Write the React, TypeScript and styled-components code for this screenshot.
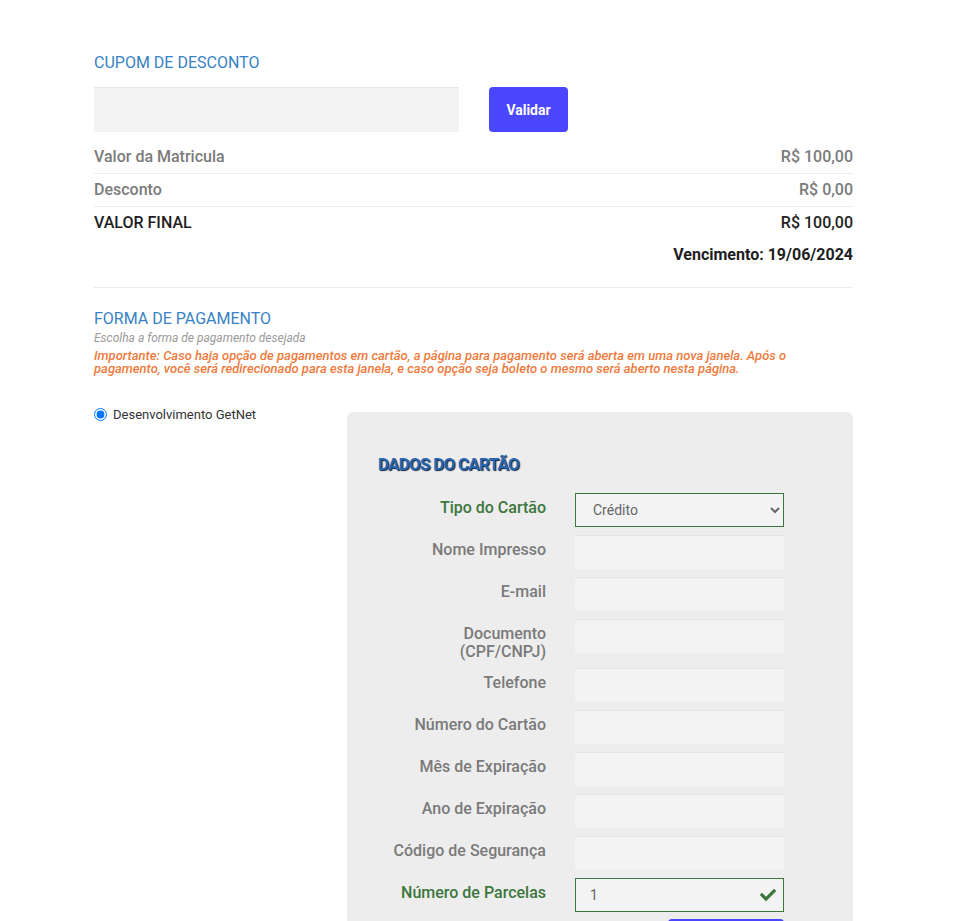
import React from "react";
import styled, { createGlobalStyle } from "styled-components";
import { FaCheck } from "react-icons/fa";

const GlobalStyle = createGlobalStyle`
  html, body { margin: 0; padding: 0; background: #fff; }
  body { font-family: Roboto, "Liberation Sans", Arial, sans-serif; }
  * { box-sizing: border-box; }
`;

const Page = styled.div`
  width: 759px;
  margin-left: 94px;
  padding-top: 54px;
  padding-bottom: 60px;
`;

const SectionTitle = styled.h2<{ $top?: number }>`
  margin: ${(p) => p.$top ?? 0}px 0 0;
  font-size: 16px;
  line-height: 18px;
  font-weight: 400;
  color: #3782c4;
`;

const CouponRow = styled.div`
  display: flex;
  gap: 30px;
  margin-top: 15px;
`;

const CouponInput = styled.input`
  width: 365px;
  height: 45px;
  background: #f3f3f3;
  border: none;
  border-top: 1px solid #e6e6e6;
  outline: none;
  padding: 0 12px;
  font: inherit;
`;

const BlueButton = styled.button<{ $w: number; $h: number }>`
  width: ${(p) => p.$w}px;
  height: ${(p) => p.$h}px;
  background: #4b47fd;
  color: #fff;
  border: none;
  border-radius: 4px;
  font-family: Roboto, "Liberation Sans", Arial, sans-serif;
  font-size: 14px;
  font-weight: 700;
  cursor: pointer;
`;

const SummaryList = styled.div`
  margin-top: 9px;
`;

const SummaryRow = styled.div<{ $strong?: boolean; $line?: boolean }>`
  display: flex;
  justify-content: space-between;
  align-items: center;
  height: 33px;
  padding-bottom: 2px;
  border-bottom: ${(p) => (p.$line ? "1px solid #ececec" : "none")};
  font-size: 16px;
  font-weight: 500;
  color: ${(p) => (p.$strong ? "#1e1e1e" : "#7b7b7b")};
`;

const DueRow = styled.div`
  height: 28px;
  display: flex;
  align-items: center;
  justify-content: flex-end;
  font-size: 16px;
  font-weight: 700;
  color: #1e1e1e;
`;

const Divider = styled.hr`
  margin: 19px 0 0;
  border: none;
  border-top: 1px solid #ececec;
`;

const Hint = styled.p`
  margin: 3px 0 0;
  font-size: 12px;
  line-height: 14px;
  font-style: italic;
  color: #9a9a9a;
`;

const Warning = styled.p`
  margin: 4px 0 0;
  font-size: 13px;
  line-height: 13px;
  font-style: italic;
  font-weight: 500;
  color: #f07a3c;
`;

const PaymentGrid = styled.div`
  display: grid;
  grid-template-columns: 253px 506px;
  margin-top: 33px;
  align-items: start;
`;

const RadioLabel = styled.label`
  display: flex;
  align-items: center;
  gap: 6px;
  font-size: 13px;
  line-height: 13px;
  color: #333;
  input {
    margin: 0;
    width: 13px;
    height: 13px;
  }
`;

const Panel = styled.div`
  margin-top: 4px;
  background: #ededed;
  border-radius: 6px;
  padding: 42px 69px 40px 31px;
`;

const PanelTitle = styled.h3`
  margin: 0 0 19px;
  font-size: 17px;
  line-height: 20px;
  font-weight: 700;
  letter-spacing: -0.75px;
  color: #2766b3;
  text-shadow: 1px 1px 1px #0d2440;
`;

const FormGrid = styled.div`
  display: grid;
  grid-template-columns: 168px 209px;
  column-gap: 29px;
  row-gap: 8px;
`;

const FieldLabel = styled.label<{ $ok?: boolean }>`
  text-align: right;
  font-size: 16px;
  font-weight: 500;
  line-height: 17.5px;
  padding-top: 6px;
  color: ${(p) => (p.$ok ? "#3c763d" : "#7a7a7a")};
`;

const FieldWrap = styled.div`
  position: relative;
  height: 34px;
`;

const TextInput = styled.input<{ $ok?: boolean }>`
  width: 100%;
  height: 34px;
  background: #f3f3f3;
  border: ${(p) => (p.$ok ? "1px solid #3c763d" : "none")};
  border-top: 1px solid ${(p) => (p.$ok ? "#3c763d" : "#e4e4e4")};
  padding: 0 14px;
  outline: none;
  font-family: Roboto, "Liberation Sans", Arial, sans-serif;
  font-size: 14px;
  color: #666;
`;

const Select = styled.select`
  width: 100%;
  height: 34px;
  background: #f3f3f3;
  border: 1px solid #3c763d;
  border-radius: 0;
  padding: 0 10px 0 13px;
  outline: none;
  font-family: Roboto, "Liberation Sans", Arial, sans-serif;
  font-size: 14px;
  color: #666;
`;

const CheckMark = styled.span`
  position: absolute;
  right: 8px;
  top: 9px;
  color: #3c763d;
  display: flex;
`;

const SubmitRow = styled.div`
  display: flex;
  margin-top: 7px;
  padding-left: 290px;
`;

const fields = [
  "Nome Impresso",
  "E-mail",
  "Documento (CPF/CNPJ)",
  "Telefone",
  "Número do Cartão",
  "Mês de Expiração",
  "Ano de Expiração",
  "Código de Segurança",
];

export default function App() {
  return (
    <>
      <GlobalStyle />
      <Page>
        <SectionTitle>CUPOM DE DESCONTO</SectionTitle>
        <CouponRow>
          <CouponInput />
          <BlueButton $w={79} $h={45}>Validar</BlueButton>
        </CouponRow>
        <SummaryList>
          <SummaryRow $line>
            <span>Valor da Matricula</span>
            <span>R$ 100,00</span>
          </SummaryRow>
          <SummaryRow $line>
            <span>Desconto</span>
            <span>R$ 0,00</span>
          </SummaryRow>
          <SummaryRow $strong>
            <span>VALOR FINAL</span>
            <span>R$ 100,00</span>
          </SummaryRow>
          <DueRow>Vencimento: 19/06/2024</DueRow>
        </SummaryList>
        <Divider />
        <SectionTitle $top={22}>FORMA DE PAGAMENTO</SectionTitle>
        <Hint>Escolha a forma de pagamento desejada</Hint>
        <Warning>
          Importante: Caso haja opção de pagamentos em cartão, a página para pagamento será aberta em uma nova janela. Após o
          <br />
          pagamento, você será redirecionado para esta janela, e caso opção seja boleto o mesmo será aberto nesta página.
        </Warning>
        <PaymentGrid>
          <RadioLabel>
            <input type="radio" name="pay" defaultChecked />
            Desenvolvimento GetNet
          </RadioLabel>
          <Panel>
            <PanelTitle>DADOS DO CARTÃO</PanelTitle>
            <FormGrid>
              <FieldLabel $ok>Tipo do Cartão</FieldLabel>
              <FieldWrap>
                <Select defaultValue="credito">
                  <option value="credito">Crédito</option>
                  <option value="debito">Débito</option>
                </Select>
              </FieldWrap>
              {fields.map((f) => (
                <React.Fragment key={f}>
                  <FieldLabel>
                    {f === "Documento (CPF/CNPJ)" ? (
                      <>
                        Documento
                        <br />
                        (CPF/CNPJ)
                      </>
                    ) : (
                      f
                    )}
                  </FieldLabel>
                  <FieldWrap>
                    <TextInput />
                  </FieldWrap>
                </React.Fragment>
              ))}
              <FieldLabel $ok>Número de Parcelas</FieldLabel>
              <FieldWrap>
                <TextInput $ok defaultValue="1" />
                <CheckMark>
                  <FaCheck size={16} />
                </CheckMark>
              </FieldWrap>
            </FormGrid>
            <SubmitRow>
              <BlueButton $w={154} $h={34}>Pagar</BlueButton>
            </SubmitRow>
          </Panel>
        </PaymentGrid>
      </Page>
    </>
  );
}
